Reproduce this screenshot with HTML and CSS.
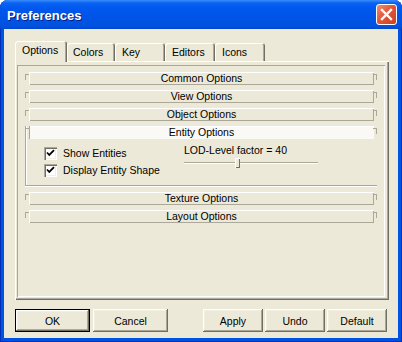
FILE: index.html
```html
<!DOCTYPE html>
<html lang="en">
<head>
    <meta charset="UTF-8">
    <title>Preferences</title>
    <link rel="stylesheet" href="styles.css">
</head>
<body>
    <div class="window">
        <div class="titlebar">
            <span class="title">Preferences</span>
            <div class="close">
                <svg width="21" height="21" viewBox="0 0 21 21">
                    <path d="M6 6 L15 15 M15 6 L6 15" stroke="#fff" stroke-width="2.4" stroke-linecap="square"/>
                </svg>
            </div>
        </div>

        <div class="client">
            <div class="tabs">
                <div class="tab active">Options</div>
                <div class="tab w48">Colors</div>
                <div class="tab">Key</div>
                <div class="tab">Editors</div>
                <div class="tab">Icons</div>
            </div>

            <div class="panel">
                <div class="frame">
                    <div class="section"><div class="bar">Common Options</div></div>
                    <div class="section"><div class="bar">View Options</div></div>
                    <div class="section"><div class="bar">Object Options</div></div>

                    <div class="section open">
                        <div class="bar hot">Entity Options</div>
                        <div class="group-body">
                            <div class="checks">
                                <label class="check">
                                    <span class="box">
                                        <svg width="9" height="9" viewBox="0 0 9 9"><path d="M1 3.5 L3.3 6 L8 1.2" fill="none" stroke="#000" stroke-width="1.8"/></svg>
                                    </span>
                                    Show Entities
                                </label>
                                <label class="check">
                                    <span class="box">
                                        <svg width="9" height="9" viewBox="0 0 9 9"><path d="M1 3.5 L3.3 6 L8 1.2" fill="none" stroke="#000" stroke-width="1.8"/></svg>
                                    </span>
                                    Display Entity Shape
                                </label>
                            </div>
                            <div class="lod">
                                <div class="lod-label">LOD-Level factor = 40</div>
                                <div class="slider">
                                    <div class="track"></div>
                                    <div class="thumb" style="left: 51px"></div>
                                </div>
                            </div>
                        </div>
                    </div>

                    <div class="section"><div class="bar">Texture Options</div></div>
                    <div class="section"><div class="bar">Layout Options</div></div>
                </div>
            </div>

            <div class="buttons">
                <div class="btn-group">
                    <button class="btn wide default">OK</button>
                    <button class="btn wide">Cancel</button>
                </div>
                <div class="btn-group tight">
                    <button class="btn">Apply</button>
                    <button class="btn">Undo</button>
                    <button class="btn">Default</button>
                </div>
            </div>
        </div>
    </div>
</body>
</html>
```

FILE: styles.css
```css
body {
    margin: 0;
    font-family: "Liberation Sans", Arial, sans-serif;
    font-size: 10.5px;
    color: #000;
}
.window {
    width: 402px;
    height: 342px;
    display: flex;
    flex-direction: column;
    background: #0053e1;
    border-radius: 8px 8px 0 0;
    box-shadow: inset 1px 0 #0030b8, inset -1px 0 #0030b8, inset 0 -1px #0030b8;
}
.titlebar {
    height: 29px;
    flex: none;
    display: flex;
    align-items: center;
    padding: 0 5px 0 7px;
    border-radius: 8px 8px 0 0;
    background: linear-gradient(#3b8df9 0, #0a62f5 3px, #0058ee 8px, #0054e6 18px, #0052e0 26px, #0047cc 29px);
}
.title {
    color: #fff;
    font-weight: bold;
    font-size: 13px;
    text-shadow: 1px 1px #0a1a80;
    padding-top: 1px;
}
.close {
    margin-left: auto;
    width: 21px;
    height: 21px;
    box-sizing: border-box;
    border: 1px solid #fff;
    border-radius: 3px;
    background: linear-gradient(135deg, #f08e70, #e2573a 45%, #cc4020);
    display: flex;
    align-items: center;
    justify-content: center;
}
.close svg {
    margin: -1px;
}
.client {
    flex: 1;
    margin: 0 4px 4px;
    background: #ece9d8;
    padding: 12px 11px 0 11px;
}

/* tabs */
.tabs {
    display: flex;
    align-items: flex-end;
    height: 20px;
}
.tab {
    width: 50px;
    height: 18px;
    box-sizing: border-box;
    padding: 3px 0 0 7px;
    line-height: 13px;
    background: #ece9d8;
    border-radius: 3px 3px 0 0;
    box-shadow: inset 1px 1px #fff, inset -1px 0 #716f64, inset -2px 0 #aca899;
}
.tab.w48 {
    width: 48px;
    padding-left: 6px;
}
.tab.active {
    width: 52px;
    height: 21px;
    margin-bottom: -1px;
    position: relative;
    z-index: 1;
    padding-top: 3px;
}

/* panel */
.panel {
    width: 374px;
    height: 239px;
    box-sizing: border-box;
    padding: 4px 4px 3px 2px;
    display: flex;
    background: #ece9d8;
    box-shadow: inset 1px 1px #fff, inset -1px -1px #716f64, inset -2px -2px #aca899;
}
.frame {
    flex: 1;
    padding: 7px 8px 0 8px;
    box-shadow: inset 1px 1px #aca899, inset -1px -1px #fff;
}
.section {
    position: relative;
    padding: 0 3px 0 4px;
    margin-bottom: 5px;
}
.section::before,
.section::after {
    content: "";
    position: absolute;
    top: 2px;
    width: 3px;
    height: 5px;
    border-top: 1px solid #aca899;
}
.section::before {
    left: 0;
    border-left: 1px solid #aca899;
}
.section::after {
    right: 0;
    border-right: 1px solid #aca899;
}
.section.open {
    box-shadow: inset 1px 0 #aca899, inset 2px 0 #fff;
}
.bar {
    height: 13px;
    line-height: 13px;
    text-align: center;
    background: #ece9d8;
    box-shadow: inset 1px 1px #fff, inset -1px -1px #aca899;
}
.bar.hot {
    background: #faf9f6;
    box-shadow: inset 1px 0 #aca899, inset 0 1px #fff;
}
.group-body {
    height: 48px;
    box-sizing: border-box;
    margin: 0 -3px 0 -4px;
    padding: 5px 0 0 19px;
    display: flex;
    box-shadow: inset 0 -1px #fff, inset 0 -2px #aca899, inset 1px 0 #aca899, inset 2px 0 #fff;
}
.checks {
    width: 140px;
    padding-top: 3px;
}
.check {
    display: flex;
    align-items: center;
    height: 13px;
    line-height: 13px;
    margin-bottom: 4px;
    gap: 6px;
    white-space: nowrap;
}
.box {
    width: 13px;
    height: 13px;
    box-sizing: border-box;
    background: #fff;
    display: flex;
    align-items: center;
    justify-content: center;
    box-shadow: inset 1px 1px #aca899, inset 2px 2px #716f64, inset -1px -1px #fff, inset -2px -2px #f1efe2;
}
.lod-label {
    line-height: 13px;
}
.slider {
    position: relative;
    width: 134px;
    height: 11px;
    padding-top: 5px;
    box-sizing: border-box;
}
.track {
    height: 1px;
    background: #aca899;
    border-bottom: 1px solid #fff;
}
.thumb {
    position: absolute;
    top: 1px;
    width: 5px;
    height: 10px;
    background: #ece9d8;
    box-shadow: inset 1px 1px #fff, inset -1px -1px #716f64;
}

/* buttons */
.buttons {
    display: flex;
    justify-content: space-between;
    margin-top: 9px;
}
.btn-group {
    display: flex;
    gap: 3px;
}
.btn-group.tight {
    gap: 2px;
}
.btn {
    width: 60px;
    height: 23px;
    padding: 0;
    border: none;
    background: #ece9d8;
    font-family: "Liberation Sans", Arial, sans-serif;
    font-size: 10.5px;
    color: #000;
    box-shadow: inset -1px -1px #716f64, inset 1px 1px #fff, inset -2px -2px #aca899, inset 2px 2px #f1efe2;
}
.btn.wide {
    width: 75px;
}
.btn.default {
    border: 1px solid #000;
}
```
